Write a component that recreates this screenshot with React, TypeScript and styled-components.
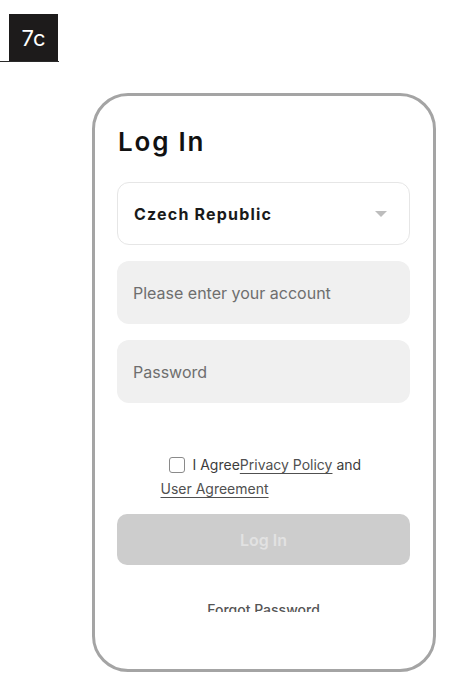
import styled, { createGlobalStyle } from 'styled-components';

const GlobalStyle = createGlobalStyle`
  *, *::before, *::after {
    box-sizing: border-box;
  }
  body {
    margin: 0;
    background: #ffffff;
    font-family: Inter, "Noto Sans", sans-serif;
  }
`;

const Page = styled.div`
  width: 452px;
  height: 698px;
  overflow: hidden;
  background: #ffffff;
`;

const LabelBar = styled.div`
  width: 59px;
  padding: 14px 0 0 9px;
  border-bottom: 1px solid #2a2a2a;
`;

const Label = styled.div`
  width: 49px;
  height: 47px;
  background: #1d1b1b;
  color: #ffffff;
  font-size: 22px;
  display: flex;
  align-items: center;
  justify-content: center;
`;

const Phone = styled.div`
  margin: 31px 0 0 92px;
  width: 344px;
  height: 579px;
  border: 3px solid #a4a4a4;
  border-radius: 36px;
  padding: 30px 23px 0 22px;
  display: flex;
  flex-direction: column;
`;

const Heading = styled.h1`
  margin: 0 0 24px 1px;
  font-size: 26px;
  line-height: 32px;
  font-weight: 600;
  letter-spacing: 1.8px;
  color: #111111;
`;

const Select = styled.div`
  height: 63px;
  border: 1px solid #e6e6e6;
  border-radius: 12px;
  padding: 0 22px 0 16px;
  display: flex;
  align-items: center;
  justify-content: space-between;
  font-size: 16px;
  font-weight: 700;
  letter-spacing: 1.2px;
  color: #1a1a1a;
`;

const Caret = styled.span`
  width: 0;
  height: 0;
  border-left: 6px solid transparent;
  border-right: 6px solid transparent;
  border-top: 6px solid #bdbdbd;
`;

const Field = styled.div`
  margin-top: 16px;
  height: 63px;
  border-radius: 12px;
  background: #f0f0f0;
  padding: 0 16px;
  display: flex;
  align-items: center;
  font-size: 16px;
  color: #6e6e6e;
`;

const Agreement = styled.div`
  width: 206px;
  margin: 50px auto 0;
  font-size: 14px;
  line-height: 24px;
  color: #3c3c3c;
`;

const Box = styled.span`
  display: inline-block;
  width: 16px;
  height: 16px;
  border: 1px solid #8a8a8a;
  border-radius: 3px;
  margin: 0 8px 0 8px;
  vertical-align: -3px;
`;

const Link = styled.span`
  text-decoration: underline;
  text-underline-offset: 3px;
  color: #505050;
`;

const Button = styled.div`
  margin-top: 13px;
  height: 51px;
  border-radius: 10px;
  background: #cdcdcd;
  color: #e2e2e2;
  font-size: 16px;
  font-weight: 600;
  display: flex;
  align-items: center;
  justify-content: center;
`;

const Forgot = styled.div`
  margin-top: 35px;
  height: 12px;
  overflow: hidden;
  text-align: center;
  font-size: 14px;
  line-height: 20px;
  font-weight: 500;
  color: #555555;
`;

export default function App() {
  return (
    <Page>
      <GlobalStyle />
      <LabelBar>
        <Label>7c</Label>
      </LabelBar>
      <Phone>
        <Heading>Log In</Heading>
        <Select>
          <span>Czech Republic</span>
          <Caret />
        </Select>
        <Field>Please enter your account</Field>
        <Field>Password</Field>
        <Agreement>
          <Box />I Agree<Link>Privacy Policy</Link> and <Link>User Agreement</Link>
        </Agreement>
        <Button>Log In</Button>
        <Forgot>Forgot Password</Forgot>
      </Phone>
    </Page>
  );
}
